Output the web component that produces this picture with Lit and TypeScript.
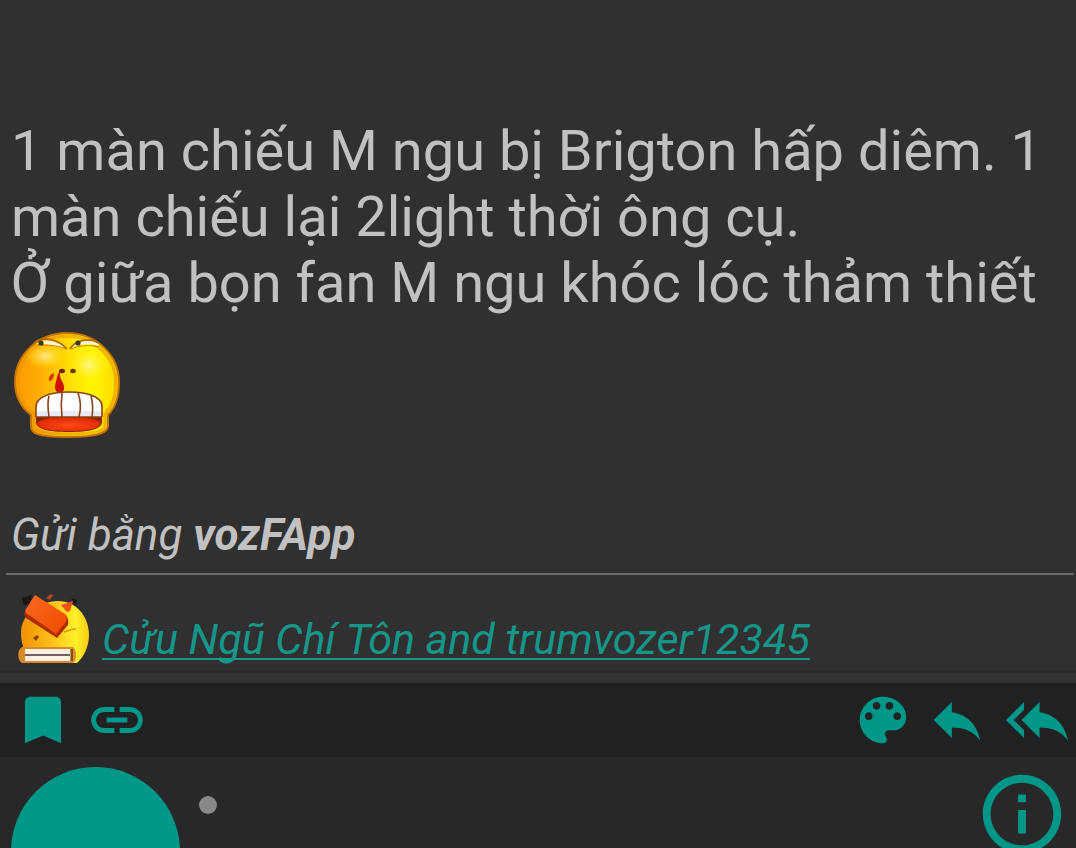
import { LitElement, html, css } from "lit";
import { customElement } from "lit/decorators.js";

const icon = (path: string) => html`<svg viewBox="0 0 24 24" aria-hidden="true"><path d=${path}></path></svg>`;

const BOOKMARK = "M17 3H7c-1.1 0-2 .9-2 2v16l7-3 7 3V5c0-1.1-.9-2-2-2z";
const LINK =
  "M3.9 12c0-1.71 1.39-3.1 3.1-3.1h4V7H7c-2.76 0-5 2.24-5 5s2.24 5 5 5h4v-1.9H7c-1.71 0-3.1-1.39-3.1-3.1zM8 13h8v-2H8v2zm9-6h-4v1.9h4c1.71 0 3.1 1.39 3.1 3.1s-1.39 3.1-3.1 3.1h-4V17h4c2.76 0 5-2.24 5-5s-2.24-5-5-5z";
const PALETTE =
  "M12 3c-4.97 0-9 4.03-9 9s4.03 9 9 9c.83 0 1.5-.67 1.5-1.5 0-.39-.15-.74-.39-1.01-.23-.26-.38-.61-.38-.99 0-.83.67-1.5 1.5-1.5H16c2.76 0 5-2.24 5-5 0-4.42-4.03-8-9-8zm-5.5 9c-.83 0-1.5-.67-1.5-1.5S5.67 9 6.5 9 8 9.67 8 10.5 7.33 12 6.5 12zm3-4C8.67 8 8 7.33 8 6.5S8.67 5 9.5 5s1.5.67 1.5 1.5S10.33 8 9.5 8zm5 0c-.83 0-1.5-.67-1.5-1.5S13.67 5 14.5 5s1.5.67 1.5 1.5S15.33 8 14.5 8zm3 4c-.83 0-1.5-.67-1.5-1.5S16.67 9 17.5 9s1.5.67 1.5 1.5-.67 1.5-1.5 1.5z";
const REPLY = "M10 9V5l-7 7 7 7v-4.1c5 0 8.5 1.6 11 5.1-1-5-4-10-11-11z";
const REPLY_ALL = "M7 8V5l-7 7 7 7v-3l-4-4 4-4zm6 1V5l-7 7 7 7v-4.1c5 0 8.5 1.6 11 5.1-1-5-4-10-11-11z";
const INFO =
  "M11 17h2v-6h-2v6zm1-15C6.48 2 2 6.48 2 12s4.48 10 10 10 10-4.48 10-10S17.52 2 12 2zm0 18c-4.41 0-8-3.59-8-8s3.59-8 8-8 8 3.59 8 8-3.59 8-8 8zM11 9h2V7h-2v2z";

const rageFace = html`<svg class="rage" viewBox="0 0 108 108" role="img" aria-label="Angry face with a nosebleed">
  <defs>
    <linearGradient id="skin" x1="0" x2="1"><stop offset="0" stop-color="#ff9a00"></stop><stop offset=".25" stop-color="#ffae05"></stop><stop offset=".55" stop-color="#ffe205"></stop><stop offset=".75" stop-color="#fff600"></stop><stop offset="1" stop-color="#ffd800"></stop></linearGradient>
    <radialGradient id="shine"><stop offset="0" stop-color="#fff7b0" stop-opacity=".8"></stop><stop offset="1" stop-color="#fff200" stop-opacity="0"></stop></radialGradient>
    <radialGradient id="tongue" cx=".5" cy=".6" r=".6"><stop offset="0" stop-color="#ff4a18"></stop><stop offset="1" stop-color="#dd2600"></stop></radialGradient>
  </defs>
  <path d="M54 2C25 2 2 24 2 51c0 15 7 26 16 33v11c0 7 5 11 36 11s41-4 41-11V84c8-8 11-19 11-33C106 24 83 2 54 2z" fill="url(#skin)" stroke="#c47400" stroke-width="2"></path>
  <path d="M54 5C27 5 5 26 5 51c0 15 7 25 16 32v12c0 5 5 8 33 8s38-3 38-8V83c8-8 11-18 11-32C103 26 81 5 54 5z" fill="none" stroke="#e89400" stroke-width="3.500" opacity=".6"></path>
  <ellipse cx="32" cy="25" rx="20" ry="13" fill="url(#shine)"></ellipse>
  <ellipse cx="76" cy="34" rx="20" ry="18" fill="url(#shine)"></ellipse>
  <path d="M23 13c7-6 22-4 30 5-10-4-22-5-30-5z" fill="#fff3cc"></path>
  <path d="M58 17c5-7 19-10 28-4v2c-9-3-19-2-28 2z" fill="#fff3cc"></path>
  <path d="M21 12c9-8 25-3 33 6M57 18c5-9 20-12 29-6" fill="none" stroke="#b06c00" stroke-width="1.800"></path>
  <path d="M25 14c9 0 19 0 28 4M58 18c8-4 19-4 28-2" fill="none" stroke="#c88400" stroke-width="1"></path>
  <circle cx="28" cy="12" r="2.600" fill="#3a3a18"></circle><circle cx="65" cy="12" r="2.600" fill="#3a3a18"></circle>
  <ellipse cx="49" cy="40" rx="3" ry="2.200" fill="#6b2500"></ellipse><ellipse cx="60" cy="40" rx="2.800" ry="2.200" fill="#6b3500"></ellipse>
  <path d="M48 40c-2 3-1 7 1 10 3 5 3 12-2 12s-6-6-4-11c1-4 1-9 5-11z" fill="#cc1400"></path>
  <path d="M41 42c-4 1-6 5-5 8 4 0 5-4 5-8z" fill="#d83a00"></path>
  <path d="M23 74c0-7 12-13 33-13s33 6 33 13v17c0 7-12 10-33 10s-33-3-33-10z" fill="#8b2500"></path>
  <path d="M24 92c6-8 58-8 64 0-2 6-12 8-32 8s-30-2-32-8z" fill="url(#tongue)"></path>
  <path d="M23 76c0-9 12-15 33-15s33 6 33 14v11H23z" fill="#fff"></path>
  <path d="M23 80h66v6H23z" fill="#dcdcf0" opacity=".6"></path>
  <path d="M23 86V76c0-9 12-15 33-15s33 6 33 14v11M36 65c-2 7-1 14 0 21M49 62c-1 8-1 16 0 24M65 62c3 8 3 16 1 24M78 65c2 7 2 14 1 21M23 86h66" fill="none" stroke="#8a4315" stroke-width="1.600"></path>
</svg>`;

const brickFace = html`<svg class="brick" viewBox="0 0 72 72" role="img" aria-label="Face hit by a brick">
  <defs>
    <linearGradient id="face" x1="0" x2="1"><stop offset="0" stop-color="#f09000"></stop><stop offset=".5" stop-color="#ffc61c"></stop><stop offset=".8" stop-color="#fff02a"></stop><stop offset="1" stop-color="#f8cc10"></stop></linearGradient>
    <linearGradient id="clay" x1="0" x2="1" y2="1"><stop offset="0" stop-color="#f86a20"></stop><stop offset="1" stop-color="#f04a00"></stop></linearGradient>
  </defs>
  <path d="M4 5l10-3-2 8-6 3zM53 5l6 2-1 6z" fill="#1c1614"></path>
  <path d="M40 8C20 8 3 22 3 40c0 10 3 18 8 24l2 6h46c7-6 12-17 12-28C71 23 58 8 40 8z" fill="url(#face)"></path>
  <path d="M28 5l5-4 2 1-3 5z" fill="#b8481a"></path>
  <path d="M43 12l12-4-3 10-3 1z" fill="#ee5010"></path>
  <path d="M46 39c5-2 8-3 12-3" fill="none" stroke="#d49c10" stroke-width="1.500"></path>
  <path d="M15 45l4-3 2 2-3 4z" fill="#8a4200"></path>
  <path d="M17 2l31 20c2 3 3 7 2 10L39 45 8 25c-2-3-2-5 0-8z" fill="#b02c04"></path>
  <path d="M17 2l31 20c1 2 1 5-1 8l-9 11L8 20c-1-2-1-3 0-4z" fill="url(#clay)"></path>
  <path d="M4 54h51c4 3 4 13 0 16H4c-5-3-5-13 0-16z" fill="#d98a28"></path>
  <path d="M7 56h45v12H7z" fill="#fff0e4"></path>
  <path d="M7 62h45M54 56v12" fill="none" stroke="#4a3038" stroke-width="1.300"></path>
</svg>`;

@customElement("app-root")
export class AppRoot extends LitElement {
  static styles = css`
    :host {
      display: flex;
      flex-direction: column;
      height: 100vh;
      overflow: hidden;
      background: #303030;
      color: #c1c1c1;
      font-family: Roboto, "Noto Sans", sans-serif;
    }
    svg { display: block; fill: currentColor; }
    .post { padding: 118px 0 0 11px; }
    .message { margin: 0; font-size: 56px; line-height: 66px; }
    .rage { width: 108px; height: 108px; margin: 15px 0 0 2px; }
    .signature { margin: 70px 0 0; font-size: 44px; line-height: 52px; font-style: italic; }
    .rule { height: 2px; margin: 12px 2px 0 6px; border: 0; background: #696969; }
    .likes {
      display: flex;
      align-items: center;
      gap: 12px;
      padding: 18px 18px 6px;
      border-bottom: 2px solid #2c2c2c;
    }
    .brick { width: 72px; height: 72px; flex: none; }
    .likes a {
      margin-top: 20px;
      color: #159688;
      font-size: 43px;
      line-height: 52px;
      font-style: italic;
      text-decoration-thickness: 2px;
      text-underline-offset: 4px;
      text-decoration-skip-ink: none;
    }
    .edge { height: 10px; background: #323232; }
    .toolbar {
      display: flex;
      align-items: center;
      padding: 0 2px 0 6px;
      background: #212121;
      color: #009788;
    }
    button { display: block; border: 0; background: none; color: inherit; font: inherit; padding: 6px; cursor: pointer; }
    .toolbar svg { width: 62px; height: 62px; }
    .spacer { flex: 1; }
    .last { margin-left: 6px; }
    .next {
      flex: 1;
      min-height: 0;
      overflow: hidden;
      display: flex;
      align-items: flex-start;
      padding: 10px 7px 0 11px;
      background: #282828;
      color: #009788;
    }
    .avatar { width: 169px; height: 169px; border-radius: 50%; background: #009788; flex: none; }
    .status { width: 18px; height: 18px; margin: 29px 0 0 19px; border-radius: 50%; background: #888; }
    .info { padding: 0; }
    .info svg { width: 94px; height: 94px; }
    @media (max-width: 600px) {
      .message { font-size: 32px; line-height: 40px; }
      .likes a, .signature { font-size: 26px; line-height: 32px; }
      .toolbar svg { width: 36px; height: 36px; }
    }
  `;

  render() {
    return html`
      <article class="post">
        <p class="message">
          1 màn chiếu M ngu bị Brigton hấp diêm. 1 màn chiếu lại 2light thời ông cụ.<br />Ở giữa bọn fan M ngu khóc lóc thảm thiết
        </p>
        ${rageFace}
        <p class="signature">Gửi bằng <b>vozFApp</b></p>
      </article>
      <hr class="rule" />
      <div class="likes">${brickFace}<a href="#likes">Cửu Ngũ Chí Tôn and trumvozer12345</a></div>
      <div class="edge"></div>
      <nav class="toolbar" aria-label="Post actions">
        <button aria-label="Bookmark">${icon(BOOKMARK)}</button>
        <button aria-label="Copy link">${icon(LINK)}</button>
        <span class="spacer"></span>
        <button aria-label="Theme">${icon(PALETTE)}</button>
        <button aria-label="Reply">${icon(REPLY)}</button>
        <button class="last" aria-label="Reply all">${icon(REPLY_ALL)}</button>
      </nav>
      <section class="next" aria-label="Next post">
        <div class="avatar"></div>
        <span class="status"></span>
        <span class="spacer"></span>
        <button class="info" aria-label="User information">${icon(INFO)}</button>
      </section>
    `;
  }
}
